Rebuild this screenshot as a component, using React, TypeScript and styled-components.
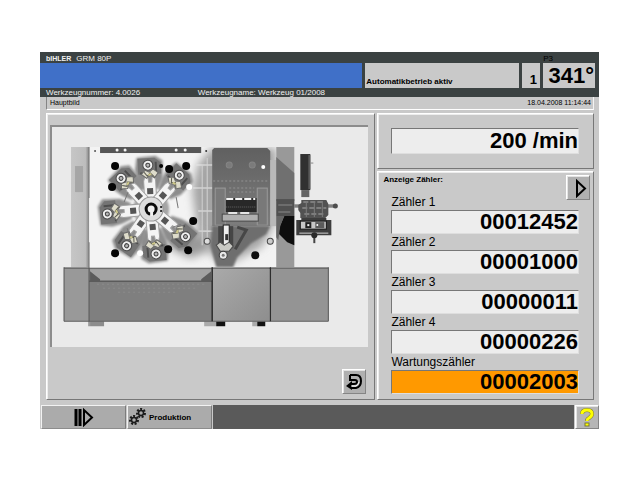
import React from 'react';
import styled, { createGlobalStyle } from 'styled-components';

const GlobalStyle = createGlobalStyle`
  *, *::before, *::after { box-sizing: border-box; }
  body {
    margin: 0;
    background: #ffffff;
    font-family: "Liberation Sans", Arial, sans-serif;
    color: #000000;
  }
`;

const Page = styled.main`
  padding: 52px 41px 52px 40px;
`;

const Screen = styled.div`
  display: flex;
  flex-direction: column;
  background: #c9c9c9;
`;

const Header = styled.header`
  background: #3b4242;
  color: #f2f2f2;
  font-size: 8px;
  line-height: 9px;
`;

const TitleRow = styled.div`
  display: flex;
  justify-content: space-between;
  align-items: center;
  height: 11px;
  padding: 2px 46px 0 6px;
`;

const Machine = styled.div`
  display: flex;
  gap: 5px;
`;

const Brand = styled.strong`
  font-size: 7px;
`;

const ProgramTag = styled.span`
  color: #000000;
`;

const StatusRow = styled.div`
  display: grid;
  grid-template-columns: 323fr 154fr 18px 52px;
  column-gap: 3px;
  height: 25px;
  padding-right: 4px;
`;

const MessageBar = styled.div`
  background: #4070c8;
`;

const StatusCell = styled.div<{ $start?: boolean }>`
  display: flex;
  align-items: flex-end;
  justify-content: ${(p) => (p.$start ? 'flex-start' : 'flex-end')};
  padding: 0 1px 1px;
  background: #c9c9c9;
  color: #000000;
  white-space: nowrap;
`;

const StationNumber = styled.strong`
  padding-right: 2px;
  font-size: 13px;
  line-height: 15px;
`;

const Angle = styled.strong`
  font-size: 22px;
  line-height: 22px;
`;

const StateText = styled.span`
  font-weight: 700;
  line-height: 11px;
`;

const ToolRow = styled.div`
  display: grid;
  grid-template-columns: 152fr 402fr;
  height: 9px;
  padding-left: 6px;
`;

const CaptionRow = styled.div`
  display: flex;
  justify-content: space-between;
  margin: 0 5px 0 6px;
  height: 13px;
  padding: 1px 2px 0 3px;
  border-left: 1px solid #858585;
  border-right: 1px solid #f4f4f4;
  border-bottom: 1px solid #ffffff;
  font-size: 7px;
  line-height: 9px;
`;

const Body = styled.div`
  display: grid;
  grid-template-columns: 330fr 217fr;
  gap: 2px;
  padding: 3px 5px 5px 6px;
`;

const Panel = styled.section`
  border: 1px solid;
  border-color: #ffffff #777777 #777777 #ffffff;
  box-shadow: inset 1px 1px 0 #ededed;
`;

const PicturePanel = styled(Panel)`
  display: flex;
  flex-direction: column;
  justify-content: space-between;
  padding: 11px 6px 5px 3px;
`;

const Photo = styled.svg`
  display: block;
  width: 100%;
  height: auto;
  background: #eaeaea;
  border-top: 2px solid #8c8c8c;
  border-left: 2px solid #8c8c8c;
`;

const Readings = styled.div`
  display: flex;
  flex-direction: column;
  gap: 2px;
`;

const SpeedPanel = styled(Panel)`
  padding: 14px 14px 14px 13px;
`;

const CounterPanel = styled(Panel)`
  padding: 3px 3px 5px 5px;
`;

const CounterHeader = styled.div`
  display: flex;
  justify-content: space-between;
  margin-bottom: -6px;
`;

const CounterTitle = styled.h2`
  margin: 0;
  font-size: 8px;
  line-height: 10px;
  font-weight: 700;
`;

const IconButton = styled.button`
  display: flex;
  align-items: center;
  justify-content: center;
  width: 24px;
  height: 25px;
  padding: 0;
  background: #b0b0b0;
  border: 1px solid;
  border-color: #ffffff #858585 #858585 #ffffff;
  box-shadow: inset 1px 1px 0 #e4e4e4;
`;

const ReturnButton = styled(IconButton)`
  align-self: flex-end;
  margin-right: 2px;
`;

const CounterList = styled.div`
  display: flex;
  flex-direction: column;
  padding: 0 11px 0 8px;
`;

const CounterRow = styled.div`
  display: flex;
  flex-direction: column;
`;

const CounterLabel = styled.label`
  font-size: 12px;
  line-height: 16px;
`;

const ValueField = styled.input<{ $alert?: boolean; $tall?: boolean }>`
  display: block;
  width: 100%;
  height: ${(p) => (p.$tall ? 26 : 24)}px;
  padding: 0;
  border: 1px solid;
  border-color: #777777 #dedede #dedede #777777;
  border-radius: 0;
  outline: none;
  background: ${(p) => (p.$alert ? '#ff9900' : '#ededed')};
  color: #000000;
  font-family: inherit;
  font-size: 22px;
  line-height: 22px;
  font-weight: 700;
  text-align: right;
`;

const Footer = styled.footer`
  display: grid;
  grid-template-columns: 85fr 85fr 361fr 24px;
  column-gap: 1px;
  height: 24px;
  padding-left: 1px;
`;

const TabButton = styled.button`
  display: flex;
  align-items: center;
  justify-content: center;
  gap: 3px;
  padding: 0;
  background: #ababab;
  border: 1px solid;
  border-color: #f2f2f2 #7c7c7c #8c8c8c #f2f2f2;
  color: #000000;
  font-family: inherit;
  font-size: 8px;
  font-weight: 700;
`;

const GearTab = styled(TabButton)`
  justify-content: flex-start;
  padding-left: 1px;
`;

const FooterFill = styled.div`
  background: #5a5a5a;
`;

const HelpButton = styled(IconButton)`
  height: 24px;
  background: #b6b6b6;
`;

/* Slide units sit round the hub; each one is drawn pointing up and turned. */
const slides = [
  { turn: -3, reach: 44 },
  { turn: 41, reach: 44 },
  { turn: -43, reach: 43 },
  { turn: -95, reach: 44 },
  { turn: -145, reach: 44 },
  { turn: 175, reach: 45 },
  { turn: 130, reach: 44 },
];

const holes = [
  [115, 166], [112, 187], [169, 169], [186, 166], [161, 166],
  [193, 221], [115, 253], [168, 249], [188, 250],
];

function Slide({ turn, reach }: { turn: number; reach: number }) {
  return (
    <g transform={`translate(151 209) rotate(${turn})`}>
      <path d={`M-12 ${-reach - 8} L7 ${-reach - 9} L14 ${-reach - 4} L13 ${-reach + 14} L8 -20 L-8 -20 L-12 ${-reach + 14} L-14 ${-reach + 4}Z`} fill="#8d8d8d" filter="url(#soften)" />
      <path d={`M-11 ${-reach - 7} h17 l6 5 v11 h-23z`} fill="#747474" />
      <path d={`M7 ${-reach - 3} v10 M-9 ${-reach + 8} h6`} stroke="#4e4e4e" strokeWidth="2" />
      <path d="M-6 -9 L-6 -28 L-4 -35 L-2 -35 L-1 -27 L2 -27 L3 -35 L5 -35 L6 -28 L6 -9Z" fill="#f4f4f4" stroke="#a2a2a2" strokeWidth="1" />
      <rect x="-3" y="-21" width="6" height="6" fill="#555555" />
      <path d="M-8 -35 l4 -4 4 2 4 -3 5 4 -4 5 -4 -3 -4 3z" fill="#dedccb" stroke="#6b6b6b" strokeWidth="1" />
      <path d="M-5 -37 l3 4 3 -3 4 4" fill="none" stroke="#5a5a50" strokeWidth="1" />
      <path d="M-1 -34 l3 -1" stroke="#cfc98a" strokeWidth="2" />
      <circle cx="-1" cy={-reach} r="5" fill="#f0f0f0" stroke="#4a4a4a" strokeWidth="1" />
      <circle cx="-1" cy={-reach} r="2" fill="#b5b5b5" stroke="#444444" strokeWidth="1" />
    </g>
  );
}

function MachinePhoto() {
  return (
    <Photo viewBox="52 127 316 220" role="img" aria-label="Maschine">
      <defs>
        <filter id="soften" x="-20%" y="-20%" width="140%" height="140%"><feGaussianBlur stdDeviation="1.2" /></filter>
        <filter id="haze" x="-20%" y="-20%" width="140%" height="140%"><feGaussianBlur stdDeviation="4" /></filter>
        <linearGradient id="plate" x1="0" y1="0" x2="0" y2="1">
          <stop offset="0" stopColor="#606060" /><stop offset="1" stopColor="#7d7d7d" />
        </linearGradient>
        <linearGradient id="door" x1="0" y1="0" x2="1" y2="1">
          <stop offset="0" stopColor="#aaaaaa" /><stop offset="1" stopColor="#8e8e8e" />
        </linearGradient>
        <linearGradient id="pillar" x1="0" y1="0" x2="1" y2="0">
          <stop offset="0" stopColor="#c6c6c6" /><stop offset="0.8" stopColor="#bdbdbd" /><stop offset="1" stopColor="#868686" />
        </linearGradient>
        <clipPath id="board"><rect x="89" y="147" width="187" height="120" /></clipPath>
      </defs>

      <rect x="89" y="147" width="187" height="120" fill="#f3f3f3" />
      <rect x="71" y="147" width="18" height="120" fill="url(#pillar)" />
      <rect x="75" y="166" width="8" height="26" fill="#a6a6a6" />
      <path d="M89 147v51m0 44v25" stroke="#777777" strokeWidth="1" />

      <g clipPath="url(#board)">
        <path d="M212 148 L198 164 L192 190 L198 235 L214 258 L232 262 L262 246 L276 220 V148Z" fill="#a4a4a4" filter="url(#haze)" />
        <path d="M196 165h18M193 188h20M198 211h16M198 231h16" stroke="#e7e7e7" strokeWidth="1" />
        <path d="M160 227 L205 235 L210 250 L190 258 L170 248Z" fill="#9a9a9a" filter="url(#haze)" />
        <path d="M202 165v80M207 158v80" stroke="#d2d2d2" strokeWidth="1" />
      </g>

      <rect x="100" y="147" width="101" height="6" fill="#565656" />
      {[117, 125, 176, 185].map((x) => <circle key={x} cx={x} cy="150" r="1.5" fill="#f5f5f5" />)}
      <circle cx="95" cy="151" r="1" fill="#555555" />
      <circle cx="206" cy="151" r="1" fill="#333333" />
      <circle cx="151" cy="209" r="18" fill="#a5a5a5" filter="url(#soften)" />
      {slides.map((s) => <Slide key={s.turn} {...s} />)}
      {holes.map(([x, y]) => <circle key={`${x}-${y}`} cx={x} cy={y} r={x === 161 ? 2 : 4} fill="#050505" />)}
      <circle cx="189" cy="187" r="3" fill="#ffffff" />
      <circle cx="140" cy="253" r="3" fill="#ffffff" />
      <circle cx="151" cy="209" r="12" fill="#dddddd" stroke="#969696" strokeWidth="1" />
      <circle cx="151" cy="209" r="5" fill="#f0f0f0" stroke="#0b0b0b" strokeWidth="3" />
      <path d="M150 210h3v6h-3z" fill="#f0f0f0" />
      <path d="M160 207h2m-2 4h2" stroke="#333333" strokeWidth="2" />
      <path d="M176 197l2 11M128 192l-4 10M127 228l3 9M173 227l8-3" stroke="#777777" strokeWidth="1" />
      <circle cx="207" cy="241" r="3" fill="#dddddd" stroke="#4d4d4d" strokeWidth="1" />

      <path d="M214 148h53l3 3v75h-58v-76z" fill="url(#plate)" />
      <circle cx="229" cy="165" r="3" fill="#7b7b7b" stroke="#858585" />
      <circle cx="252" cy="165" r="3" fill="#7b7b7b" stroke="#858585" />
      <circle cx="263" cy="167" r="2" fill="#ffffff" />
      <path d="M213 181h56M229 188h25M229 192h25" stroke="#929292" strokeWidth="1" strokeDasharray="2 2" />
      <rect x="270" y="160" width="6" height="66" fill="#b9b9b9" />
      <rect x="224" y="198" width="33" height="14" fill="#282828" />
      <path d="M226 199h29" stroke="#f4f4f4" strokeWidth="2" strokeDasharray="7 2" />
      <path d="M226 207h29" stroke="#474747" strokeWidth="2" strokeDasharray="1 1" />
      <rect x="215" y="188" width="10" height="37" fill="#797979" stroke="#9a9a9a" />
      <rect x="257" y="188" width="10" height="37" fill="#797979" stroke="#9a9a9a" />
      <rect x="222" y="214" width="36" height="7" fill="#b0b0b0" stroke="#494949" />
      <path d="M228 213h24" stroke="#e5e5e5" strokeWidth="2" strokeDasharray="9 3" />

      <g clipPath="url(#board)">
        <path d="M212 226h58l-4 8-15 9-14 14-4 10h-17l-6-22z" fill="#6e6e6e" filter="url(#soften)" />
        <path d="M237 227l9 3-11 19" fill="none" stroke="#474747" strokeWidth="3" />
      </g>
      <path d="M218 226h15v22h-15z" fill="#454545" />
      <path d="M223 225h6v20h-6z" fill="#eeeeee" stroke="#222222" />
      <rect x="225" y="234" width="3" height="6" fill="#333333" />
      <path d="M216 245l4-3 4 3 5-3 4 4-4 5h-9z" fill="#c9c9c4" stroke="#4c4c4c" />
      <circle cx="223" cy="255" r="4" fill="#e9e9e9" stroke="#3a3a3a" />
      <circle cx="223" cy="255" r="1.5" fill="#777777" />
      <circle cx="255" cy="255" r="4" fill="#101010" />
      <circle cx="270" cy="241" r="3" fill="#cccccc" stroke="#454545" />

      <rect x="276" y="147" width="18" height="120" fill="#999999" />
      <path d="M276 157l18 16v28h-18z" fill="#707070" />
      <path d="M276 199h18v17h-18z" fill="#515151" />
      <path d="M278 205h14M278 212h12" stroke="#8a8a8a" />
      <path d="M284 216h10v29l-7-3-9-9 2-8z" fill="#0e0e0e" />
      <path d="M276 216h8l-4 10-2 14-2-3z" fill="#666666" />

      <rect x="300" y="154" width="10" height="36" fill="#313131" />
      <path d="M309 155v34" stroke="#5a5a5a" strokeWidth="2" />
      <path d="M310 163h3" stroke="#888888" />
      <rect x="301" y="190" width="8" height="7" fill="#646464" />
      <path d="M294 206h42" stroke="#555555" strokeWidth="3" />
      <path d="M294 206h42" stroke="#aaaaaa" strokeWidth="1" />
      <circle cx="335" cy="206" r="2.5" fill="#4d4d4d" />
      <path d="M301 200h25l2 4v11l-3 3h-25v-5l-2-3v-5l3-2z" fill="#525252" />
      <path d="M303 202h21M302 208h24M304 214h20" stroke="#a8a8a8" strokeWidth="1" strokeDasharray="5 2" />
      <path d="M306 201v16M314 201v16M322 201v16" stroke="#7c7c7c" />
      <path d="M296 220h5v-2h25v2h5v15h-35z" fill="#3d3d3d" />
      <rect x="300" y="221" width="26" height="8" fill="#c6c6c6" stroke="#151515" />
      <rect x="305" y="222" width="6" height="6" fill="#202020" />
      <rect x="307" y="224" width="2" height="2" fill="#eeeeee" />
      <rect x="315" y="222" width="9" height="6" fill="#5b5b5b" />
      <circle cx="317" cy="225" r="1" fill="#ffffff" />
      <path d="M299 233h29" stroke="#d1d1d1" />
      <path d="M314 233v10" stroke="#444444" strokeWidth="2" />
      <circle cx="314" cy="235" r="3" fill="#2b2b2b" />

      <rect x="90" y="321" width="14" height="5" fill="#8c8c8c" />
      <rect x="204" y="321" width="12" height="5" fill="#aaaaaa" />
      <rect x="216" y="321" width="9" height="5" fill="#111111" />
      <rect x="252" y="321" width="5" height="5" fill="#aaaaaa" />
      <rect x="257" y="321" width="8" height="5" fill="#111111" />
      <rect x="89" y="268" width="123" height="53" fill="#7f7f7f" />
      <rect x="90" y="269" width="122" height="12" fill="#a3a3a3" />
      <path d="M90 271l10 8v2H90zM211 271l-10 8v2h10z" fill="#5c5c5c" />
      <path d="M89 281h123" stroke="#5b5b5b" strokeWidth="1.5" />
      <path d="M97 284h108M103 288h92M118 292h58" stroke="#8b8b8b" strokeWidth="1" strokeDasharray="2 3" />
      <rect x="64" y="267" width="25" height="54" fill="#999999" />
      <rect x="212" y="267" width="57" height="54" fill="url(#door)" />
      <rect x="270" y="267" width="58" height="54" fill="#949494" />
      <path d="M64 268h264M64 321h264" stroke="#606060" strokeWidth="1" />
      <path d="M64 267v54M89 267v59M328 267v54" stroke="#555555" strokeWidth="1" />
      <path d="M212 267v54M270 267v54" stroke="#2d2d2d" strokeWidth="1.5" />
    </Photo>
  );
}

const counters = [
  { id: 'z1', label: 'Zähler 1', value: '00012452' },
  { id: 'z2', label: 'Zähler 2', value: '00001000' },
  { id: 'z3', label: 'Zähler 3', value: '00000011' },
  { id: 'z4', label: 'Zähler 4', value: '00000226' },
  { id: 'wz', label: 'Wartungszähler', value: '00002003', alert: true },
];

function Gear({ cx, cy, r }: { cx: number; cy: number; r: number }) {
  return (
    <g fill="none" stroke="#1a1a1a">
      <circle cx={cx} cy={cy} r={r} strokeWidth="2" strokeDasharray="2 1.5" />
      <circle cx={cx} cy={cy} r={r - 1.5} strokeWidth="1.5" />
    </g>
  );
}

export default function App() {
  return (
    <>
      <GlobalStyle />
      <Page>
        <Screen>
          <Header>
            <TitleRow>
              <Machine><Brand>bIHLER</Brand><span>GRM 80P</span></Machine>
              <ProgramTag>P3</ProgramTag>
            </TitleRow>
            <StatusRow>
              <MessageBar />
              <StatusCell $start><StateText>Automatikbetrieb aktiv</StateText></StatusCell>
              <StatusCell><StationNumber>1</StationNumber></StatusCell>
              <StatusCell><Angle>341°</Angle></StatusCell>
            </StatusRow>
            <ToolRow>
              <span>Werkzeugnummer: 4.0026</span>
              <span>Werkzeugname: Werkzeug 01/2008</span>
            </ToolRow>
          </Header>
          <CaptionRow>
            <span>Hauptbild</span>
            <span>18.04.2008 11:14:44</span>
          </CaptionRow>
          <Body>
            <PicturePanel>
              <MachinePhoto />
              <ReturnButton type="button" aria-label="Zurück">
                <svg width="18" height="20" viewBox="0 0 18 20">
                  <path d="M5 3h6q5 0 5 6t-5 7H7" fill="none" stroke="#000000" strokeWidth="2" />
                  <path d="M5 3v5h5q2 0 2 2t-3 2H6" fill="none" stroke="#000000" strokeWidth="2" />
                  <path d="M1 14l6-5v9z" fill="#000000" />
                  <path d="M6 14h5q2-1 3-4" fill="none" stroke="#ffffff" strokeWidth="1" />
                </svg>
              </ReturnButton>
            </PicturePanel>
            <Readings>
              <SpeedPanel>
                <ValueField aria-label="Drehzahl" $tall readOnly value="200 /min" />
              </SpeedPanel>
              <CounterPanel>
                <CounterHeader>
                  <CounterTitle>Anzeige Zähler:</CounterTitle>
                  <IconButton type="button" aria-label="Weiter">
                    <svg width="20" height="20" viewBox="0 0 20 20">
                      <path d="M9 3v15l8-7.500z" fill="none" stroke="#000000" strokeWidth="2" />
                    </svg>
                  </IconButton>
                </CounterHeader>
                <CounterList>
                  {counters.map((c) => (
                    <CounterRow key={c.id}>
                      <CounterLabel htmlFor={c.id}>{c.label}</CounterLabel>
                      <ValueField id={c.id} readOnly value={c.value} $alert={c.alert} />
                    </CounterRow>
                  ))}
                </CounterList>
              </CounterPanel>
            </Readings>
          </Body>
          <Footer>
            <TabButton type="button" aria-label="Start">
              <svg width="20" height="20" viewBox="0 0 20 20">
                <path d="M2 2v17M6 2v17" stroke="#000000" strokeWidth="3" />
                <path d="M10 3v15l8-7.500z" fill="none" stroke="#000000" strokeWidth="2" />
              </svg>
            </TabButton>
            <GearTab type="button">
              <svg width="17" height="18" viewBox="0 0 17 18">
                <Gear cx={5} cy={12} r={4} />
                <Gear cx={12} cy={5} r={4} />
              </svg>
              Produktion
            </GearTab>
            <FooterFill />
            <HelpButton type="button" aria-label="Hilfe">
              <svg width="18" height="20" viewBox="0 0 18 20">
                <path d="M4 7q0-4 5-4t5 4q0 2-3 4-2 1-2 3" fill="none" stroke="#77773a" strokeWidth="4" />
                <path d="M4 7q0-4 5-4t5 4q0 2-3 4-2 1-2 3" fill="none" stroke="#ffff00" strokeWidth="3" />
                <rect x="7" y="16" width="4" height="3" fill="#ffff00" stroke="#77773a" strokeWidth="1" />
              </svg>
            </HelpButton>
          </Footer>
        </Screen>
      </Page>
    </>
  );
}
